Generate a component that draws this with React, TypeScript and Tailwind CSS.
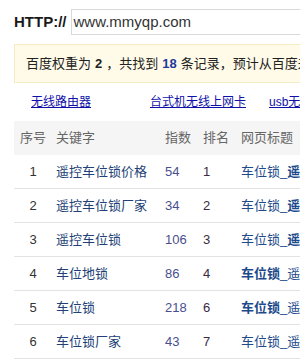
const rows = [
  { n: 1, kw: "遥控车位锁价格", idx: "54", rank: "1", t: "a" },
  { n: 2, kw: "遥控车位锁厂家", idx: "34", rank: "2", t: "a" },
  { n: 3, kw: "遥控车位锁", idx: "106", rank: "3", t: "a" },
  { n: 4, kw: "车位地锁", idx: "86", rank: "4", t: "b" },
  { n: 5, kw: "车位锁", idx: "218", rank: "6", t: "b" },
  { n: 6, kw: "车位锁厂家", idx: "43", rank: "7", t: "c" },
];

function Title({ t }: { t: string }) {
  if (t === "a")
    return (
      <span>
        车位锁_<b className="font-bold">遥控车位锁</b>
      </span>
    );
  if (t === "b")
    return (
      <span>
        <b className="font-bold">车位锁</b>_遥控车位锁
      </span>
    );
  return <span>车位锁_遥控车位锁</span>;
}

export default function App() {
  return (
    <div className="h-[364px] w-[300px] overflow-hidden bg-white font-['Liberation_Sans','Noto_Sans_CJK_SC',sans-serif]">
      <div className="flex h-[44px] items-center whitespace-nowrap pl-[14px]">
        <span className="text-[15px] font-bold text-[#1a1a1a]">HTTP://</span>
        <div className="ml-[4px] flex h-[26px] w-[260px] shrink-0 items-center border border-[#d9d9d9] px-[2px] text-[15px] text-[#333]">
          www.mmyqp.com
        </div>
      </div>

      <div className="ml-[14px] flex h-[39px] w-[330px] items-center whitespace-nowrap border border-[#f4ecc4] bg-[#fffbe8] px-[11px] text-[13px] text-[#222]">
        百度权重为 <b className="mx-[4px] font-bold">2</b>，共找到 <b className="mx-[4px] font-bold text-[#1d3a9a]">18</b> 条记录，预计从百度来访 89 次
      </div>

      <div className="flex h-[38px] items-center whitespace-nowrap pl-[31px] text-[12px] text-[#1010a8] underline">
        <span className="w-[119px] shrink-0">无线路由器</span>
        <span className="w-[119px] shrink-0">台式机无线上网卡</span>
        <span className="shrink-0">usb无线网卡</span>
      </div>

      <div className="ml-[14px] w-[340px] whitespace-nowrap text-[13px]">
        <div className="flex h-[34px] items-center bg-[#f5f5f5] text-[#666]">
          <span className="w-[38px] text-center">序号</span>
          <span className="w-[109px] pl-[4px]">关键字</span>
          <span className="w-[38px] pl-[4px]">指数</span>
          <span className="w-[38px] pl-[4px]">排名</span>
          <span className="pl-[4px]">网页标题</span>
        </div>
        {rows.map((r) => (
          <div key={r.n} className="flex h-[34px] items-center border-b border-[#e3e3e3]">
            <span className="w-[38px] text-center text-[#333]">{r.n}</span>
            <span className="w-[109px] pl-[4px] text-[#223f76]">{r.kw}</span>
            <span className="w-[38px] pl-[4px] text-[#4a4f8c]">{r.idx}</span>
            <span className="w-[38px] pl-[4px] text-[#3a2a44]">{r.rank}</span>
            <span className="pl-[4px] text-[#1c4a8a]">
              <Title t={r.t} />
            </span>
          </div>
        ))}
      </div>
    </div>
  );
}
